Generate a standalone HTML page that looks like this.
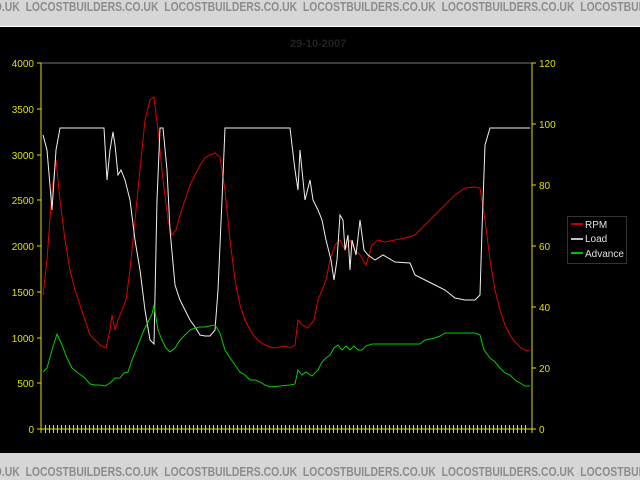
<!DOCTYPE html>
<html><head><style>
body{margin:0;width:640px;height:480px;background:#000;overflow:hidden;font-family:"Liberation Sans",sans-serif}
.ban{position:absolute;left:0;width:640px;background:#d6d6d6;color:#8c8c8c;font-weight:bold;font-size:13px;white-space:nowrap;overflow:hidden}
</style></head><body>
<div class="ban" style="top:0;height:26px;border-bottom:1px solid #fff"><div style="position:absolute;top:-1px;left:-38px;transform:scaleX(0.8);transform-origin:left">ERS.CO.UK&nbsp;&nbsp;LOCOSTBUILDERS.CO.UK&nbsp;&nbsp;LOCOSTBUILDERS.CO.UK&nbsp;&nbsp;LOCOSTBUILDERS.CO.UK&nbsp;&nbsp;LOCOSTBUILDERS.CO.UK&nbsp;&nbsp;LOCOSTBUILDERS.CO.UK</div></div>
<div class="ban" style="top:453px;height:27px"><div style="position:absolute;top:11px;left:-38px;transform:scaleX(0.8);transform-origin:left">ERS.CO.UK&nbsp;&nbsp;LOCOSTBUILDERS.CO.UK&nbsp;&nbsp;LOCOSTBUILDERS.CO.UK&nbsp;&nbsp;LOCOSTBUILDERS.CO.UK&nbsp;&nbsp;LOCOSTBUILDERS.CO.UK&nbsp;&nbsp;LOCOSTBUILDERS.CO.UK</div></div>
<svg width="640" height="480" style="position:absolute;left:0;top:0" font-family="Liberation Sans, sans-serif" font-size="10">
<text x="290" y="47" fill="#222" font-weight="bold" font-size="11">29-10-2007</text>
<line x1="41" y1="63" x2="532" y2="63" stroke="#777"/>
<g stroke="#e0e000" fill="none">
<line x1="41" y1="63" x2="41" y2="433"/>
<line x1="532" y1="63" x2="532" y2="433"/>
<line x1="37" y1="429" x2="536" y2="429"/>
<path d="M37 63h4M37 109h4M37 155h4M37 200h4M37 246h4M37 292h4M37 338h4M37 383h4M532 63h4M532 124h4M532 185h4M532 246h4M532 307h4M532 368h4"/>
<line x1="45" y1="429" x2="529" y2="429" stroke-dasharray="1 3" stroke-width="8"/>
</g>
<g fill="#e0e000" text-anchor="end">
<text x="34" y="67">4000</text><text x="34" y="113">3500</text><text x="34" y="159">3000</text><text x="34" y="204">2500</text><text x="34" y="250">2000</text><text x="34" y="296">1500</text><text x="34" y="342">1000</text><text x="34" y="387">500</text><text x="34" y="433">0</text>
</g>
<g fill="#e0e000">
<text x="539" y="67">120</text><text x="539" y="128">100</text><text x="539" y="189">80</text><text x="539" y="250">60</text><text x="539" y="311">40</text><text x="539" y="372">20</text><text x="539" y="433">0</text>
</g>
<polyline fill="none" stroke="#e00000" points="43,295 47,260 52,190 56,160 60,200 65,240 70,270 75,290 80,305 85,320 90,335 95,340 100,345 106,348 110,330 112,315 115,330 118,320 122,310 126,300 130,270 135,220 140,170 145,120 150,100 154,97 158,130 163,180 168,220 172,235 176,230 180,215 185,200 190,185 195,175 200,165 205,158 210,155 215,153 220,157 225,190 230,240 235,280 240,305 245,320 250,330 255,337 260,342 265,345 270,347 275,348 280,347 285,346 290,348 295,345 298,320 302,325 308,328 314,320 318,300 322,290 326,280 330,260 335,245 340,240 345,250 350,240 355,250 360,255 366,265 372,245 378,240 385,242 395,240 405,238 415,235 425,225 435,215 445,205 455,195 465,188 475,187 480,188 485,220 490,260 495,290 500,310 505,325 510,335 515,342 520,347 525,350 530,351"/>
<polyline fill="none" stroke="#f0f0f0" points="43,135 47,150 52,210 56,150 60,128 65,128 104,128 107,180 110,150 113,132 115,145 118,175 121,170 125,180 130,200 135,240 140,270 145,310 150,340 154,344 157,200 160,128 163,128 167,170 170,230 175,285 180,300 185,310 190,320 195,327 200,335 205,336 210,336 215,330 218,290 222,200 225,128 290,128 292,145 295,170 298,190 300,150 302,170 305,200 310,180 313,200 318,210 322,220 326,240 331,260 334,280 337,260 340,215 343,220 345,250 348,235 350,270 352,240 356,255 360,220 364,250 368,255 375,260 383,255 395,262 410,263 415,275 425,280 435,285 445,290 455,298 465,300 475,300 480,295 482,230 485,145 490,128 530,128"/>
<polyline fill="none" stroke="#00d000" points="43,372 47,368 52,350 57,334 62,345 67,358 72,368 78,373 85,378 90,384 95,385 100,385 105,386 110,383 115,378 120,378 124,373 128,372 132,360 136,350 140,340 144,330 148,322 152,314 154,305 158,330 162,340 166,348 170,352 175,348 180,340 185,335 190,330 195,328 200,327 205,327 210,326 215,325 220,333 225,350 230,358 235,365 240,372 245,375 250,380 255,380 260,382 265,385 270,387 280,386 290,385 295,384 298,370 302,375 306,372 312,376 318,370 322,362 326,358 330,355 334,348 338,345 342,350 346,346 350,350 354,346 358,350 362,350 366,346 372,344 420,344 425,340 435,338 440,336 445,333 455,333 475,333 480,335 484,350 490,358 495,362 500,368 505,373 510,375 515,380 520,383 525,386 530,386"/>
<rect x="567.5" y="216.5" width="59" height="47" fill="#000" stroke="#333"/>
<line x1="571" y1="224" x2="583" y2="224" stroke="#c00000" stroke-width="2"/>
<line x1="571" y1="239" x2="583" y2="239" stroke="#c0c0c0" stroke-width="2"/>
<line x1="571" y1="253" x2="583" y2="253" stroke="#00c000" stroke-width="2"/>
<g fill="#e0e0e0" font-size="10"><text x="585" y="228">RPM</text><text x="585" y="242">Load</text><text x="585" y="257">Advance</text></g>
</svg>
</body></html>
